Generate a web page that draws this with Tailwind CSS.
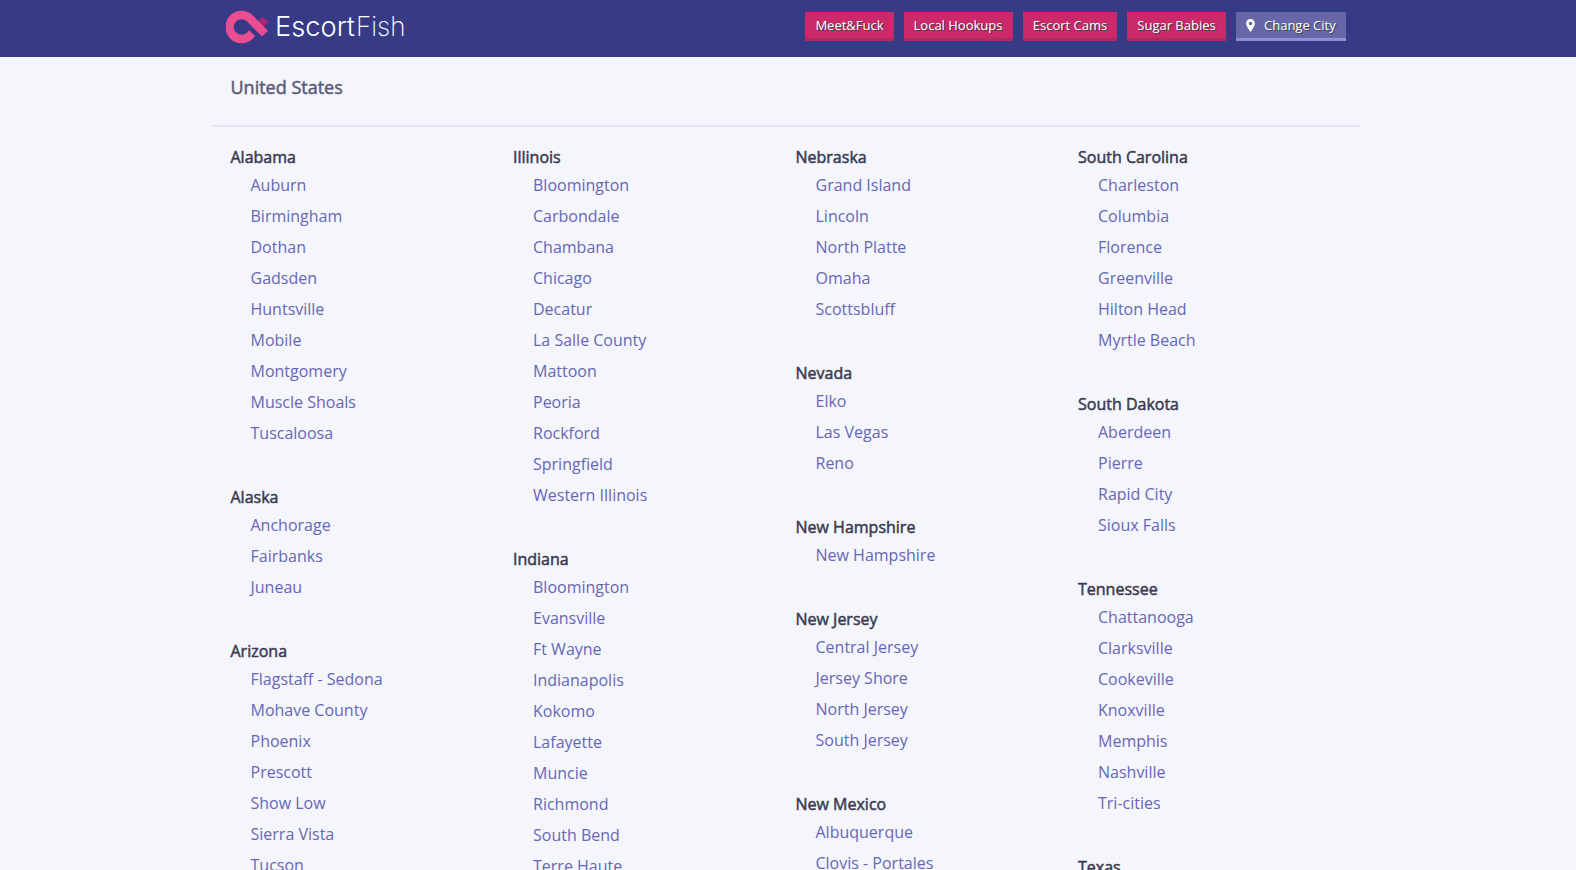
<!DOCTYPE html>
<html lang="en">
<head>
    <meta charset="utf-8"/>
    <meta name="viewport" content="width=device-width, initial-scale=1.0"/>
    <title>EscortFish - United States</title>
    <script src="https://cdn.jsdelivr.net/npm/@tailwindcss/browser@4"></script>
</head>
<body class="bg-[#f5f6fc] font-['Open_Sans',sans-serif] h-screen overflow-hidden">
    <!-- Header -->
    <header class="bg-[#373a85] h-[57px]">
        <div class="w-[1150px] ml-[211px] pl-[15px] pr-[15px] flex justify-between items-start">
            <svg class="mt-[10px]" width="184" height="36" viewBox="0 0 184 36">
                <path d="M36.7 6.7L42.6 12L37.3 17L31.6 11.700Z" fill="#a82874"/>
                <path d="M26.200 23.300L24 25.500A12 12 0 1 1 24 8.500L39 23.600" fill="none" stroke="#ec4c90" stroke-width="8.3"/>
                <text x="49" y="26" font-family="Inter" font-weight="300" font-size="27.5" fill="#fff" textLength="80" lengthAdjust="spacingAndGlyphs">Escort</text>
                <text x="130" y="26" font-family="Inter" font-weight="200" font-size="27.5" fill="#fff" textLength="49.500" lengthAdjust="spacingAndGlyphs">Fish</text>
            </svg>
            <nav class="mt-3 flex gap-[10px] text-[13px] leading-[26px] text-white text-center [text-shadow:1px_1px_0_#444]">
                <a class="w-[89px] h-[29px] bg-[#cc286c] border-b-3 border-[#b02a62]">Meet&amp;Fuck</a>
                <a class="w-[109px] h-[29px] bg-[#cc286c] border-b-3 border-[#b02a62] pr-px">Local Hookups</a>
                <a class="w-[94px] h-[29px] bg-[#cc286c] border-b-3 border-[#b02a62]">Escort Cams</a>
                <a class="w-[99px] h-[29px] bg-[#cc286c] border-b-3 border-[#b02a62]">Sugar Babies</a>
                <a class="w-[110px] h-[29px] bg-[#6666a8] border-b-3 border-[#9090d0] flex pl-[10px]">
                    <svg class="mt-[7px] mr-[9px]" width="9" height="13" viewBox="0 0 9 13"><path d="M4.5 0A4.4 4.4 0 0 0 .1 4.4C.1 7 2.5 9.5 4.5 13C6.5 9.5 8.9 7 8.9 4.4A4.4 4.4 0 0 0 4.5 0ZM4.5 2.7A1.8 1.8 0 1 1 4.5 6.3A1.8 1.8 0 1 1 4.5 2.7Z" fill="#fff" fill-rule="evenodd"/></svg>
                    Change City
                </a>
            </nav>
        </div>
    </header>

    <!-- Cities -->
    <main class="w-[1150px] ml-[211px]">
        <h1 class="h-[70px] pt-[17px] pl-[19.5px] border-b-2 border-[#e5e5f3] text-[18px] leading-[26px] text-[#5b5b78] [-webkit-text-stroke:0.5px]">United States</h1>
        <div id="states" class="grid grid-cols-4 items-start pl-[19.5px] w-[1149.5px] pt-[18px] text-base text-[#6666b8]"></div>
    </main>

    <script>
        const columns = [
            [
                ["Alabama", ["Auburn", "Birmingham", "Dothan", "Gadsden", "Huntsville", "Mobile", "Montgomery", "Muscle Shoals", "Tuscaloosa"]],
                ["Alaska", ["Anchorage", "Fairbanks", "Juneau"]],
                ["Arizona", ["Flagstaff - Sedona", "Mohave County", "Phoenix", "Prescott", "Show Low", "Sierra Vista", "Tucson"]]
            ],
            [
                ["Illinois", ["Bloomington", "Carbondale", "Chambana", "Chicago", "Decatur", "La Salle County", "Mattoon", "Peoria", "Rockford", "Springfield", "Western Illinois"]],
                ["Indiana", ["Bloomington", "Evansville", "Ft Wayne", "Indianapolis", "Kokomo", "Lafayette", "Muncie", "Richmond", "South Bend", "Terre Haute"]]
            ],
            [
                ["Nebraska", ["Grand Island", "Lincoln", "North Platte", "Omaha", "Scottsbluff"]],
                ["Nevada", ["Elko", "Las Vegas", "Reno"]],
                ["New Hampshire", ["New Hampshire"]],
                ["New Jersey", ["Central Jersey", "Jersey Shore", "North Jersey", "South Jersey"]],
                ["New Mexico", ["Albuquerque", "Clovis - Portales"]]
            ],
            [
                ["South Carolina", ["Charleston", "Columbia", "Florence", "Greenville", "Hilton Head", "Myrtle Beach"]],
                ["South Dakota", ["Aberdeen", "Pierre", "Rapid City", "Sioux Falls"]],
                ["Tennessee", ["Chattanooga", "Clarksville", "Cookeville", "Knoxville", "Memphis", "Nashville", "Tri-cities"]],
                ["Texas", []]
            ]
        ];

        document.getElementById("states").innerHTML = columns.map(states => `
            <div>
                ${states.map(([name, cities]) => `
                    <section class="mb-[36px]">
                        <h2 class="h-[25px] leading-[25px] text-[#3a3a50] [-webkit-text-stroke:0.5px]">${name}</h2>
                        <ul class="pl-5 leading-[31px]">
                            ${cities.map(city => `<li><a>${city}</a></li>`).join("")}
                        </ul>
                    </section>`).join("")}
            </div>`).join("");
    </script>
</body>
</html>
